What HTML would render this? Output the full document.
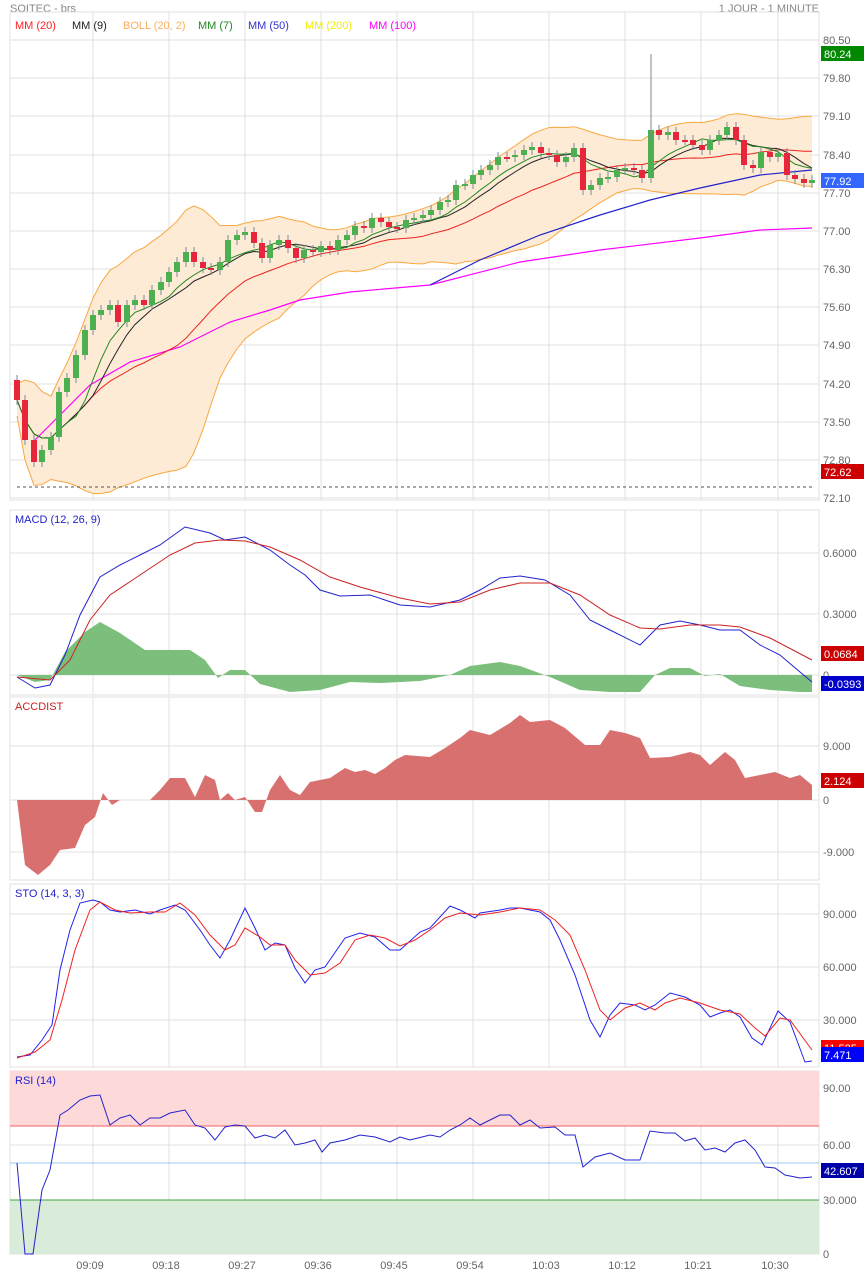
<!DOCTYPE html>
<html><head><meta charset="utf-8"><style>
body{margin:0;background:#fff;width:864px;height:1275px;overflow:hidden;font-family:"Liberation Sans",sans-serif}
svg text{font-family:"Liberation Sans",sans-serif}
</style></head><body>
<svg id="s" width="864" height="1275" xmlns="http://www.w3.org/2000/svg">
<g font-size="11" fill="#888">
<text x="10" y="12">SOITEC - brs</text>
<text x="819" y="12" text-anchor="end">1 JOUR - 1 MINUTE</text>
</g>
<g id="grid" stroke="#e0e0e0" stroke-width="1" fill="none"></g>
<!-- RSI bands -->
<rect x="10" y="1071" width="809" height="55" fill="#fdd9d9"/>
<rect x="10" y="1200" width="809" height="54" fill="#d9ebd9"/>
<line x1="10" y1="1126" x2="819" y2="1126" stroke="#f06060"/>
<line x1="10" y1="1200" x2="819" y2="1200" stroke="#44a044"/>
<line x1="10" y1="1163" x2="819" y2="1163" stroke="#9cc8f0"/>
<g id="plots"></g>
<g font-size="11" fill="#666" id="axis"></g>
<g font-size="11">
<text x="15" y="29" fill="#f22">MM (20)</text>
<text x="72" y="29" fill="#222">MM (9)</text>
<text x="123" y="29" fill="#f8b060">BOLL (20, 2)</text>
<text x="198" y="29" fill="#228822">MM (7)</text>
<text x="248" y="29" fill="#3333cc">MM (50)</text>
<text x="305" y="29" fill="#f0f000">MM (200)</text>
<text x="369" y="29" fill="#f0f">MM (100)</text>
<text x="15" y="523" fill="#22c">MACD (12, 26, 9)</text>
<text x="15" y="710" fill="#c22">ACCDIST</text>
<text x="15" y="897" fill="#22c">STO (14, 3, 3)</text>
<text x="15" y="1084" fill="#22c">RSI (14)</text>
</g>
</svg>
<script>
const S=document.getElementById('s'),NS='http://www.w3.org/2000/svg';
function el(p,t,a,txt){const e=document.createElementNS(NS,t);for(const k in a)e.setAttribute(k,a[k]);if(txt!=null)e.textContent=txt;p.appendChild(e);return e;}
const G=document.getElementById('grid'),P=document.getElementById('plots'),A=document.getElementById('axis');
const panels=[[12,500],[510,695],[697,880],[884,1067],[1071,1254]];
const vx=[93,169,245,321,397,473,549,625,701,778];
panels.forEach(([t,b])=>{el(G,'rect',{x:10,y:t,width:809,height:b-t});vx.forEach(x=>el(G,'line',{x1:x,y1:t,x2:x,y2:b}));});
const hl={0:[40,78,116,155,193,231,269,307,345,384,422,460,498],1:[553,614,675],2:[746,800,852],3:[914,967,1020],4:[1088,1145]};
for(const k in hl)hl[k].forEach(y=>el(G,'line',{x1:10,y1:y,x2:819,y2:y}));
const al=[[40,'80.50'],[78,'79.80'],[116,'79.10'],[155,'78.40'],[193,'77.70'],[231,'77.00'],[269,'76.30'],[307,'75.60'],[345,'74.90'],[384,'74.20'],[422,'73.50'],[460,'72.80'],[498,'72.10'],
[553,'0.6000'],[614,'0.3000'],[675,'0'],[746,'9.000'],[800,'0'],[852,'-9.000'],[914,'90.000'],[967,'60.000'],[1020,'30.000'],[1088,'90.00'],[1145,'60.00'],[1200,'30.000'],[1254,'0']];
al.forEach(([y,t])=>el(A,'text',{x:823,y:y+4},t));
[['09:09',93],['09:18',169],['09:27',245],['09:36',321],['09:45',397],['09:54',473],['10:03',549],['10:12',625],['10:21',701],['10:30',778]].forEach(([t,x])=>el(A,'text',{x:x-3,y:1269,'text-anchor':'middle'},t));
function pl(pts,c,w,extra){return el(P,'polyline',Object.assign({points:pts.map(p=>p.join(',')).join(' '),fill:'none',stroke:c,'stroke-width':w||1},extra||{}));}
function pg(pts,c){return el(P,'polygon',{points:pts.map(p=>p.join(',')).join(' '),fill:c});}
// price
const cl=[[17,400],[25,440],[34,462],[42,450],[51,437],[59,392],[67,378],[76,355],[85,330],[93,315],[101,310],[110,305],[118,322],[127,305],[135,300],[144,305],[152,290],[161,282],[169,272],[177,262],[186,252],[194,262],[203,268],[211,270],[220,262],[228,240],[237,235],[245,232],[254,243],[262,258],[270,245],[279,240],[288,248],[296,258],[304,250],[313,252],[321,246],[330,250],[338,240],[347,235],[355,226],[364,228],[372,218],[381,222],[389,227],[397,228],[406,220],[414,218],[423,215],[431,210],[440,202],[448,200],[456,185],[465,184],[473,175],[481,170],[490,165],[498,157],[507,157],[515,155],[524,150],[532,147],[541,153],[549,155],[557,162],[566,157],[574,148],[583,190],[591,185],[600,178],[608,177],[617,170],[625,168],[634,170],[642,178],[651,130],[659,135],[668,132],[676,140],[685,140],[693,145],[702,150],[710,140],[719,135],[727,127],[736,140],[744,165],[753,168],[761,152],[770,157],[778,153],[787,175],[795,179],[804,183],[812,180]];
const ys=cl.map(p=>p[1]);
function sma(n,i){let s=0,c=0;for(let j=Math.max(0,i-n+1);j<=i;j++){s+=ys[j];c++;}return s/c;}
function sd(n,i){const m=sma(n,i);let s=0,c=0;for(let j=Math.max(0,i-n+1);j<=i;j++){s+=(ys[j]-m)**2;c++;}return Math.sqrt(s/c);}
const up=[],dn=[];cl.forEach((p,i)=>{const m=sma(20,i),d=Math.max(sd(20,i),8);up.push([p[0],m-2*d]);dn.push([p[0],m+2*d]);});
pg(up.concat(dn.slice().reverse()),'#fdebd6');
pl(up,'#f8a840');pl(dn,'#f8a840');
pl([[35,440],[60,415],[90,385],[130,362],[180,347],[230,322],[270,310],[300,300],[350,292],[430,285],[520,262],[600,250],[700,238],[760,230],[812,228]],'#f0f',1.2);
pl([[430,285],[480,260],[540,235],[600,215],[650,200],[700,188],[760,175],[812,170]],'#22c',1.2);
pl(cl.map((p,i)=>[p[0],sma(20,i)]),'#e22');
pl(cl.map((p,i)=>[p[0],sma(9,i)]),'#222');
pl(cl.map((p,i)=>[p[0],sma(7,i)]),'#282');
cl.forEach((p,i)=>{const o=i?ys[i-1]:p[1]-20,c=p[1];const t=Math.min(o,c),b=Math.max(o,c);const col=c<o?'#4caf50':'#e8253a';
el(P,'line',{x1:p[0],y1:t-5,x2:p[0],y2:b+5,stroke:'#7a8a9a'});el(P,'rect',{x:p[0]-3,y:t,width:6,height:Math.max(b-t,2),fill:col});});
el(P,'line',{x1:651,y1:54,x2:651,y2:140,stroke:'#7a8a9a'});
el(P,'line',{x1:17,y1:487,x2:812,y2:487,stroke:'#555','stroke-dasharray':'3,3'});
// MACD
pg([[17,675],[35,682],[50,680],[65,652],[85,632],[100,622],[120,633],[145,650],[190,650],[205,660],[218,678],[230,670],[245,670],[260,684],[290,692],[320,690],[350,682],[380,683],[420,681],[450,675],[470,666],[500,662],[520,666],[550,677],[580,690],[610,692],[640,692],[655,675],[670,668],[690,668],[705,676],[720,674],[740,686],[770,690],[800,692],[812,692],[812,675]],'#7cbf7c');
pl([[17,677],[35,688],[50,685],[65,655],[80,615],[100,577],[120,565],[140,555],[160,545],[185,527],[210,533],[225,540],[245,537],[270,550],[290,565],[305,575],[320,590],[340,596],[370,595],[400,605],[430,607],[460,600],[480,590],[500,578],[520,576],[545,580],[570,595],[590,620],[610,630],[640,645],[660,625],[680,621],[700,625],[720,630],[740,630],[760,645],[780,655],[800,672],[812,682]],'#22c');
pl([[17,677],[50,680],[70,660],[90,620],[110,595],[140,575],[170,555],[195,543],[220,540],[245,541],[270,547],[300,560],[330,577],[360,587],[400,598],[430,604],[460,602],[490,590],[520,583],[550,583],[580,595],[610,615],[640,628],[660,629],[690,625],[720,625],[740,627],[770,638],[812,660]],'#c22');
// ACCDIST
pg([[17,800],[25,865],[38,875],[50,865],[60,850],[75,848],[85,825],[95,817],[103,793],[112,805],[120,800],[150,800],[160,790],[170,778],[185,778],[195,797],[205,775],[215,780],[220,800],[228,793],[235,800],[245,797],[255,812],[262,812],[270,790],[280,775],[290,790],[300,795],[310,782],[330,778],[345,768],[355,772],[365,770],[375,774],[385,768],[395,760],[405,755],[430,757],[445,748],[460,738],[470,730],[490,735],[510,723],[520,715],[530,722],[550,720],[565,728],[585,745],[600,745],[610,730],[625,733],[640,738],[650,758],[670,757],[690,752],[700,755],[710,765],[725,752],[735,760],[745,778],[760,775],[775,772],[790,778],[800,775],[812,785],[812,800]],'#d97070');
// STO
pl([[17,1057],[30,1055],[42,1040],[52,1025],[60,970],[70,930],[80,903],[93,900],[100,902],[110,910],[120,912],[135,910],[150,914],[160,910],[175,905],[185,910],[200,930],[210,945],[220,958],[230,940],[245,908],[255,928],[265,950],[275,943],[285,945],[295,968],[305,983],[315,970],[325,967],[345,938],[360,933],[375,937],[390,950],[400,950],[420,932],[430,928],[450,906],[460,910],[475,918],[480,913],[500,910],[510,908],[520,908],[540,912],[550,920],[560,940],[575,975],[590,1020],[600,1037],[610,1015],[620,1003],[635,1005],[645,1010],[655,1005],[670,993],[685,997],[700,1005],[710,1017],[720,1013],[730,1010],[740,1017],[752,1038],[762,1045],[778,1011],[790,1022],[805,1062],[812,1061]],'#22e');
pl([[17,1058],[35,1052],[50,1040],[62,1000],[75,950],[90,910],[100,902],[115,910],[130,913],[150,912],[165,912],[180,903],[195,915],[210,935],[225,950],[235,945],[245,928],[260,937],[270,945],[285,945],[295,960],[310,975],[325,973],[340,963],[355,940],[370,935],[385,938],[400,946],[415,940],[430,930],[445,918],[460,913],[480,915],[500,912],[520,908],[540,910],[555,920],[570,935],[585,970],[600,1010],[610,1020],[625,1008],[640,1003],[655,1010],[665,1003],[680,998],[700,1003],[720,1010],[740,1014],[755,1028],[765,1036],[780,1018],[790,1020],[812,1050]],'#e22');
// RSI
pl([[17,1163],[25,1254],[33,1254],[42,1190],[50,1170],[60,1115],[68,1110],[80,1100],[90,1096],[100,1095],[110,1125],[120,1118],[130,1115],[140,1125],[150,1118],[160,1118],[170,1113],[185,1110],[195,1125],[205,1128],[215,1140],[225,1127],[235,1125],[245,1126],[255,1138],[265,1135],[275,1138],[285,1130],[295,1145],[305,1143],[315,1140],[322,1152],[330,1143],[345,1140],[360,1135],[375,1137],[390,1142],[400,1137],[410,1140],[430,1135],[440,1137],[450,1130],[460,1125],[470,1118],[480,1125],[490,1120],[500,1115],[510,1115],[520,1125],[530,1120],[540,1128],[555,1127],[565,1135],[575,1135],[583,1167],[595,1157],[610,1153],[625,1160],[640,1160],[650,1131],[665,1133],[675,1133],[685,1141],[695,1138],[705,1150],[715,1148],[725,1152],[735,1143],[745,1140],[755,1150],[765,1167],[775,1168],[785,1175],[800,1178],[812,1177]],'#22c');
// value boxes
[[46,'#080','80.24'],[173,'#3366ff','77.92'],[464,'#c00','72.62'],[646,'#c00','0.0684'],[676,'#00c','-0.0393'],[773,'#c00','2.124'],[1040,'#f00','11.525'],[1047,'#00f','7.471'],[1163,'#00a','42.607']].forEach(([y,c,t])=>{el(A,'rect',{x:821,y:y,width:43,height:15,fill:c});el(A,'text',{x:824,y:y+12,fill:'#fff'},t);});
</script>
</body></html>
